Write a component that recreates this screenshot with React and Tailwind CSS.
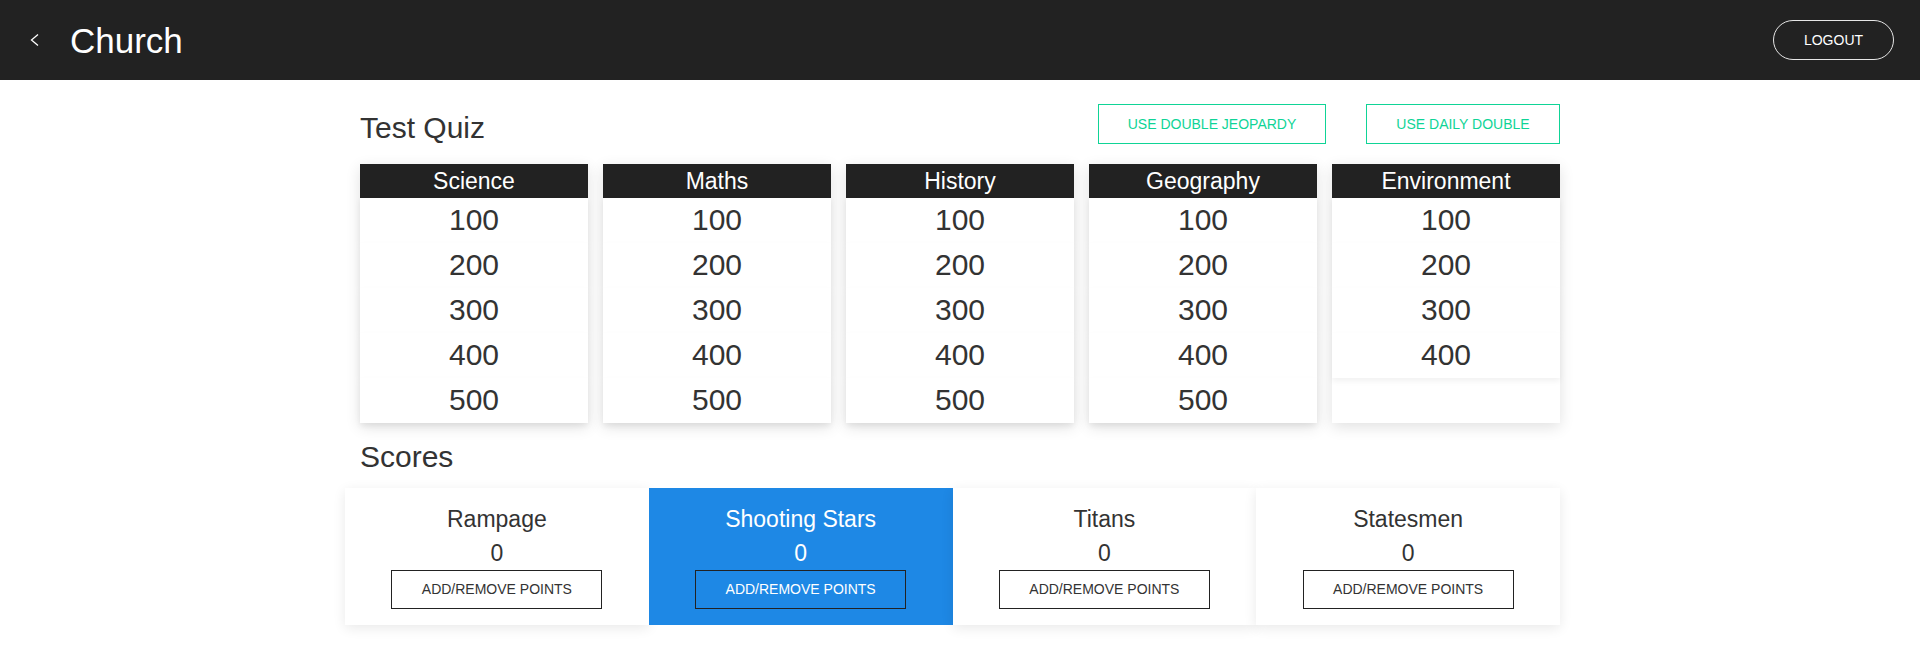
import { useState } from 'react';

const categories = [
  { name: 'Science', values: [100, 200, 300, 400, 500] },
  { name: 'Maths', values: [100, 200, 300, 400, 500] },
  { name: 'History', values: [100, 200, 300, 400, 500] },
  { name: 'Geography', values: [100, 200, 300, 400, 500] },
  { name: 'Environment', values: [100, 200, 300, 400] },
];

const teams = [
  { name: 'Rampage', score: 0 },
  { name: 'Shooting Stars', score: 0 },
  { name: 'Titans', score: 0 },
  { name: 'Statesmen', score: 0 },
];

const App = () => {
  const [active, setActive] = useState(1);

  return (
    <div className="min-h-[660px] bg-white font-['Liberation_Sans',Arial,sans-serif] text-[#333]">
      {/* Top bar */}
      <header className="h-[80px] bg-[#222] flex items-center justify-between">
        <div className="flex items-center">
          <button className="w-[70px] h-[80px] flex items-center pl-[30px]">
            <svg width="10" height="14" viewBox="0 0 10 14" fill="none">
              <polyline points="8,1.5 1.5,7 8,12.5" stroke="#fff" strokeWidth="1.3" />
            </svg>
          </button>
          <h1 className="text-[35px] text-white leading-none">Church</h1>
        </div>
        <button className="mr-[26px] w-[121px] h-[40px] rounded-full border border-[#e6e6e6] text-white text-[14px]">
          LOGOUT
        </button>
      </header>

      <main className="w-[1200px] mx-auto pt-[24px]">
        {/* Title + actions */}
        <div className="flex items-start h-[40px]">
          <h2 className="text-[30px] leading-[40px] pt-[4px]">Test Quiz</h2>
          <div className="ml-auto flex">
            <button className="w-[228px] h-[40px] border border-[#0fd496] text-[#0fd496] text-[14px]">
              USE DOUBLE JEOPARDY
            </button>
            <button className="ml-[40px] w-[194px] h-[40px] border border-[#0fd496] text-[#0fd496] text-[14px]">
              USE DAILY DOUBLE
            </button>
          </div>
        </div>

        {/* Board */}
        <div className="grid grid-cols-5 gap-x-[15px] mt-[20px]">
          {categories.map((cat) => (
            <div key={cat.name} className="h-[259px] bg-white shadow-[0_4px_14px_rgba(0,0,0,0.12)]">
              <div className="h-[34px] bg-[#222] text-white text-[23px] leading-[34px] text-center">
                {cat.name}
              </div>
              {cat.values.map((v) => (
                <div
                  key={v}
                  className="h-[45px] bg-white text-[30px] leading-[44px] text-center shadow-[0_3px_6px_rgba(0,0,0,0.06)] cursor-pointer"
                >
                  {v}
                </div>
              ))}
            </div>
          ))}
        </div>

        {/* Scores */}
        <h2 className="text-[30px] leading-[40px] mt-[14px]">Scores</h2>
        <div className="-ml-[15px] mt-[11px] grid grid-cols-4">
          {teams.map((t, i) => (
            <div
              key={t.name}
              onClick={() => setActive(i)}
              className={
                i === active
                  ? 'h-[137px] pt-[14px] bg-[#1e88e5] text-white text-center flex flex-col items-center'
                  : 'h-[137px] pt-[14px] bg-white text-[#333] text-center flex flex-col items-center shadow-[0_3px_12px_rgba(0,0,0,0.09)]'
              }
            >
              <div className="text-[23px] leading-[34px]">{t.name}</div>
              <div className="text-[23px] leading-[34px]">{t.score}</div>
              <button
                className={
                  i === active
                    ? 'w-[211px] h-[39px] border border-[#222] text-white text-[14px]'
                    : 'w-[211px] h-[39px] border border-[#222] text-[#333] text-[14px]'
                }
              >
                ADD/REMOVE POINTS
              </button>
            </div>
          ))}
        </div>
      </main>
    </div>
  );
};

export default App;
